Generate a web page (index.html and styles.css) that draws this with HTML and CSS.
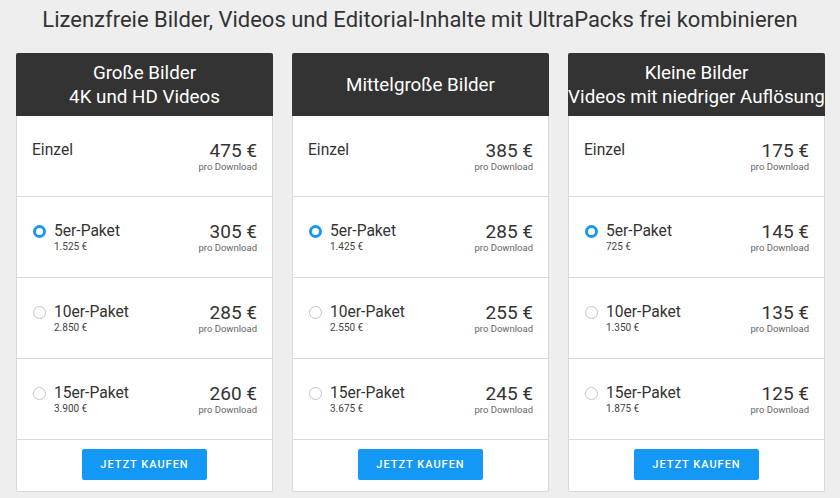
FILE: index.html
```html
<!DOCTYPE html>
<html lang="de">
<head>
<meta charset="utf-8">
<link rel="stylesheet" href="styles.css">
</head>
<body>
<h1 class="title">Lizenzfreie Bilder, Videos und Editorial-Inhalte mit UltraPacks frei kombinieren</h1>
<div class="cards">
  <div class="card">
    <div class="card-head">Große Bilder<br>4K und HD Videos</div>
    <div class="row"><div class="opt"><div class="label">Einzel</div></div><div class="price"><div class="amt">475 €</div><div class="per">pro Download</div></div></div>
    <div class="row"><div class="opt"><span class="radio on"></span><div><div class="label">5er-Paket</div><div class="sub">1.525 €</div></div></div><div class="price"><div class="amt">305 €</div><div class="per">pro Download</div></div></div>
    <div class="row"><div class="opt"><span class="radio"></span><div><div class="label">10er-Paket</div><div class="sub">2.850 €</div></div></div><div class="price"><div class="amt">285 €</div><div class="per">pro Download</div></div></div>
    <div class="row"><div class="opt"><span class="radio"></span><div><div class="label">15er-Paket</div><div class="sub">3.900 €</div></div></div><div class="price"><div class="amt">260 €</div><div class="per">pro Download</div></div></div>
    <div class="foot"><button class="buy">JETZT KAUFEN</button></div>
  </div>
  <div class="card">
    <div class="card-head">Mittelgroße Bilder</div>
    <div class="row"><div class="opt"><div class="label">Einzel</div></div><div class="price"><div class="amt">385 €</div><div class="per">pro Download</div></div></div>
    <div class="row"><div class="opt"><span class="radio on"></span><div><div class="label">5er-Paket</div><div class="sub">1.425 €</div></div></div><div class="price"><div class="amt">285 €</div><div class="per">pro Download</div></div></div>
    <div class="row"><div class="opt"><span class="radio"></span><div><div class="label">10er-Paket</div><div class="sub">2.550 €</div></div></div><div class="price"><div class="amt">255 €</div><div class="per">pro Download</div></div></div>
    <div class="row"><div class="opt"><span class="radio"></span><div><div class="label">15er-Paket</div><div class="sub">3.675 €</div></div></div><div class="price"><div class="amt">245 €</div><div class="per">pro Download</div></div></div>
    <div class="foot"><button class="buy">JETZT KAUFEN</button></div>
  </div>
  <div class="card">
    <div class="card-head">Kleine Bilder<br>Videos mit niedriger Auflösung</div>
    <div class="row"><div class="opt"><div class="label">Einzel</div></div><div class="price"><div class="amt">175 €</div><div class="per">pro Download</div></div></div>
    <div class="row"><div class="opt"><span class="radio on"></span><div><div class="label">5er-Paket</div><div class="sub">725 €</div></div></div><div class="price"><div class="amt">145 €</div><div class="per">pro Download</div></div></div>
    <div class="row"><div class="opt"><span class="radio"></span><div><div class="label">10er-Paket</div><div class="sub">1.350 €</div></div></div><div class="price"><div class="amt">135 €</div><div class="per">pro Download</div></div></div>
    <div class="row"><div class="opt"><span class="radio"></span><div><div class="label">15er-Paket</div><div class="sub">1.875 €</div></div></div><div class="price"><div class="amt">125 €</div><div class="per">pro Download</div></div></div>
    <div class="foot"><button class="buy">JETZT KAUFEN</button></div>
  </div>
</div>
</body>
</html>
```
FILE: styles.css
```css
* { box-sizing: border-box; }
html, body { margin: 0; padding: 0; }
body {
  background: #eeeeee;
  font-family: Roboto, "Liberation Sans", sans-serif;
  color: #333;
  width: 840px;
  height: 498px;
  overflow: hidden;
}
.title {
  margin: 0;
  height: 53px;
  padding-top: 6px;
  font-size: 22px;
  font-weight: 400;
  line-height: 28px;
  text-align: center;
  color: #333;
  white-space: nowrap;
}
.cards {
  display: flex;
  gap: 19px;
  padding: 0 15px 0 16px;
}
.card {
  flex: 1 1 0;
  min-width: 0;
  background: #fff;
  border: 1px solid #d9d9d9;
  border-top: none;
  border-radius: 2px;
}
.card-head {
  height: 63px;
  margin: 0 -1px;
  background: #333;
  color: #fff;
  font-size: 18.8px;
  line-height: 24px;
  text-align: center;
  display: flex;
  align-items: center;
  justify-content: center;
  white-space: nowrap;
  overflow: hidden;
  border-radius: 2px 2px 0 0;
}
.row {
  height: 81px;
  border-bottom: 1px solid #dadada;
  display: flex;
  justify-content: space-between;
  align-items: flex-start;
  padding: 23px 15px 0 15px;
}
.opt {
  display: flex;
  align-items: flex-start;
}
.label {
  font-size: 15.6px;
  line-height: 20px;
  color: #333;
  padding-top: 1px;
}
.sub {
  font-size: 10px;
  line-height: 11px;
  color: #444;
}
.radio {
  width: 13px;
  height: 13px;
  border-radius: 50%;
  border: 1px solid #c4c4c4;
  margin: 5px 8px 0 1px;
  flex: none;
}
.radio.on {
  border: 3.5px solid #1898f3;
  background: #fff;
}
.price {
  text-align: right;
  padding-top: 1px;
}
.amt {
  font-size: 19px;
  line-height: 21px;
  color: #333;
}
.per {
  font-size: 9.5px;
  line-height: 11px;
  color: #666;
}
.foot {
  height: 51px;
  display: flex;
  justify-content: center;
  padding-top: 9px;
}
.buy {
  width: 125px;
  height: 31px;
  border: none;
  border-radius: 2px;
  background: #1399f5;
  color: #fff;
  font-family: Roboto, "Liberation Sans", sans-serif;
  font-size: 11px;
  font-weight: 500;
  letter-spacing: 1px;
}
```
